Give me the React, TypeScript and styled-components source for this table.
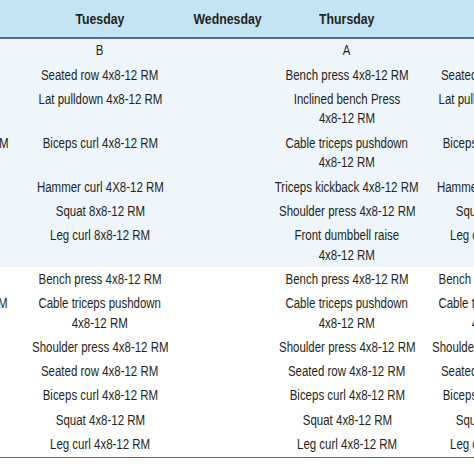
import styled, { createGlobalStyle } from 'styled-components';

const GlobalStyle = createGlobalStyle`
  body {
    margin: 0;
    background: #ffffff;
    font-family: 'Liberation Sans', Arial, sans-serif;
    color: #231f20;
  }
`;

// the original uses a condensed face; Liberation Sans squeezed to ~82% matches it
const columns = '150px 160px 96px 142px 164px';

const Viewport = styled.div`
  width: 474px;
  height: 474px;
  overflow: hidden;
  background: #ffffff;
`;
const Table = styled.div`
  width: 712px;
  margin-left: -130px;
`;
const HeaderRow = styled.div`
  display: grid;
  grid-template-columns: ${columns};
  height: 37px;
  align-items: center;
  background: #c4e4f4;
  border-bottom: 2px solid #4a6ea6;
`;
const HeaderCell = styled.div`
  display: flex;
  justify-content: center;
  font-weight: 700;
  font-size: 15px;
  padding-top: 1px;
`;
const Section = styled.div<{ $shaded?: boolean }>`
  background: ${(props) => (props.$shaded ? '#eef6fb' : '#ffffff')};
`;
const Row = styled.div`
  display: grid;
  grid-template-columns: ${columns};
`;
const Cell = styled.div<{ $edge?: boolean }>`
  display: flex;
  justify-content: ${(props) => (props.$edge ? 'flex-end' : 'center')};
  padding: 2.4px ${(props) => (props.$edge ? '12px' : '0')} 2.4px 0;
  min-width: 0;
`;
const Text = styled.span<{ $edge?: boolean }>`
  display: inline-block;
  font-size: 14px;
  line-height: 19.5px;
  white-space: nowrap;
  text-align: center;
  transform: scaleX(0.82);
  transform-origin: ${(props) => (props.$edge ? 'right' : 'center')};
`;
const HeadText = styled(Text)`
  font-size: 15px;
`;
const BottomRule = styled.div`
  border-top: 1px solid #5565bd;
`;

const days = ['Monday', 'Tuesday', 'Wednesday', 'Thursday', 'Friday'];

const B = [
  'Seated row 4x8-12 RM',
  'Lat pulldown 4x8-12 RM',
  'Biceps curl 4x8-12 RM',
  'Hammer curl 4X8-12 RM',
  'Squat 8x8-12 RM',
  'Leg curl 8x8-12 RM',
];

const firstBlock: string[][] = [
  ['', 'B', '', 'A', 'B'],
  ['', B[0], '', 'Bench press 4x8-12 RM', B[0]],
  ['', B[1], '', 'Inclined bench Press\n4x8-12 RM', B[1]],
  ['Triceps pushdown 4x8-12 RM', B[2], '', 'Cable triceps pushdown\n4x8-12 RM', B[2]],
  ['', B[3], '', 'Triceps kickback 4x8-12 RM', B[3]],
  ['', B[4], '', 'Shoulder press 4x8-12 RM', B[4]],
  ['', B[5], '', 'Front dumbbell raise\n4x8-12 RM', B[5]],
];

const full = [
  'Bench press 4x8-12 RM',
  'Cable triceps pushdown\n4x8-12 RM',
  'Shoulder press 4x8-12 RM',
  'Seated row 4x8-12 RM',
  'Biceps curl 4x8-12 RM',
  'Squat 4x8-12 RM',
  'Leg curl 4x8-12 RM',
];

const secondBlock: string[][] = full.map((t, i) => [
  i === 1 ? 'Shoulder press 4x8-12 RM' : '',
  t,
  '',
  t,
  t,
]);

function Lines({ text }: { text: string }) {
  const parts = text.split('\n');
  return (
    <>
      {parts.map((p, i) => (
        <span key={i}>
          {p}
          {i < parts.length - 1 && <br />}
        </span>
      ))}
    </>
  );
}

function Block({ rows, shaded }: { rows: string[][]; shaded?: boolean }) {
  return (
    <Section $shaded={shaded}>
      {rows.map((r, i) => (
        <Row key={i}>
          {r.map((c, j) => (
            <Cell key={j} $edge={j === 0}>
              <Text $edge={j === 0}>
                <Lines text={c} />
              </Text>
            </Cell>
          ))}
        </Row>
      ))}
    </Section>
  );
}

export default function App() {
  return (
    <Viewport>
      <GlobalStyle />
      <Table>
        <HeaderRow>
          {days.map((d) => (
            <HeaderCell key={d}>
              <HeadText as="span">{d}</HeadText>
            </HeaderCell>
          ))}
        </HeaderRow>
        <Block rows={firstBlock} shaded />
        <Block rows={secondBlock} />
        <BottomRule />
      </Table>
    </Viewport>
  );
}
